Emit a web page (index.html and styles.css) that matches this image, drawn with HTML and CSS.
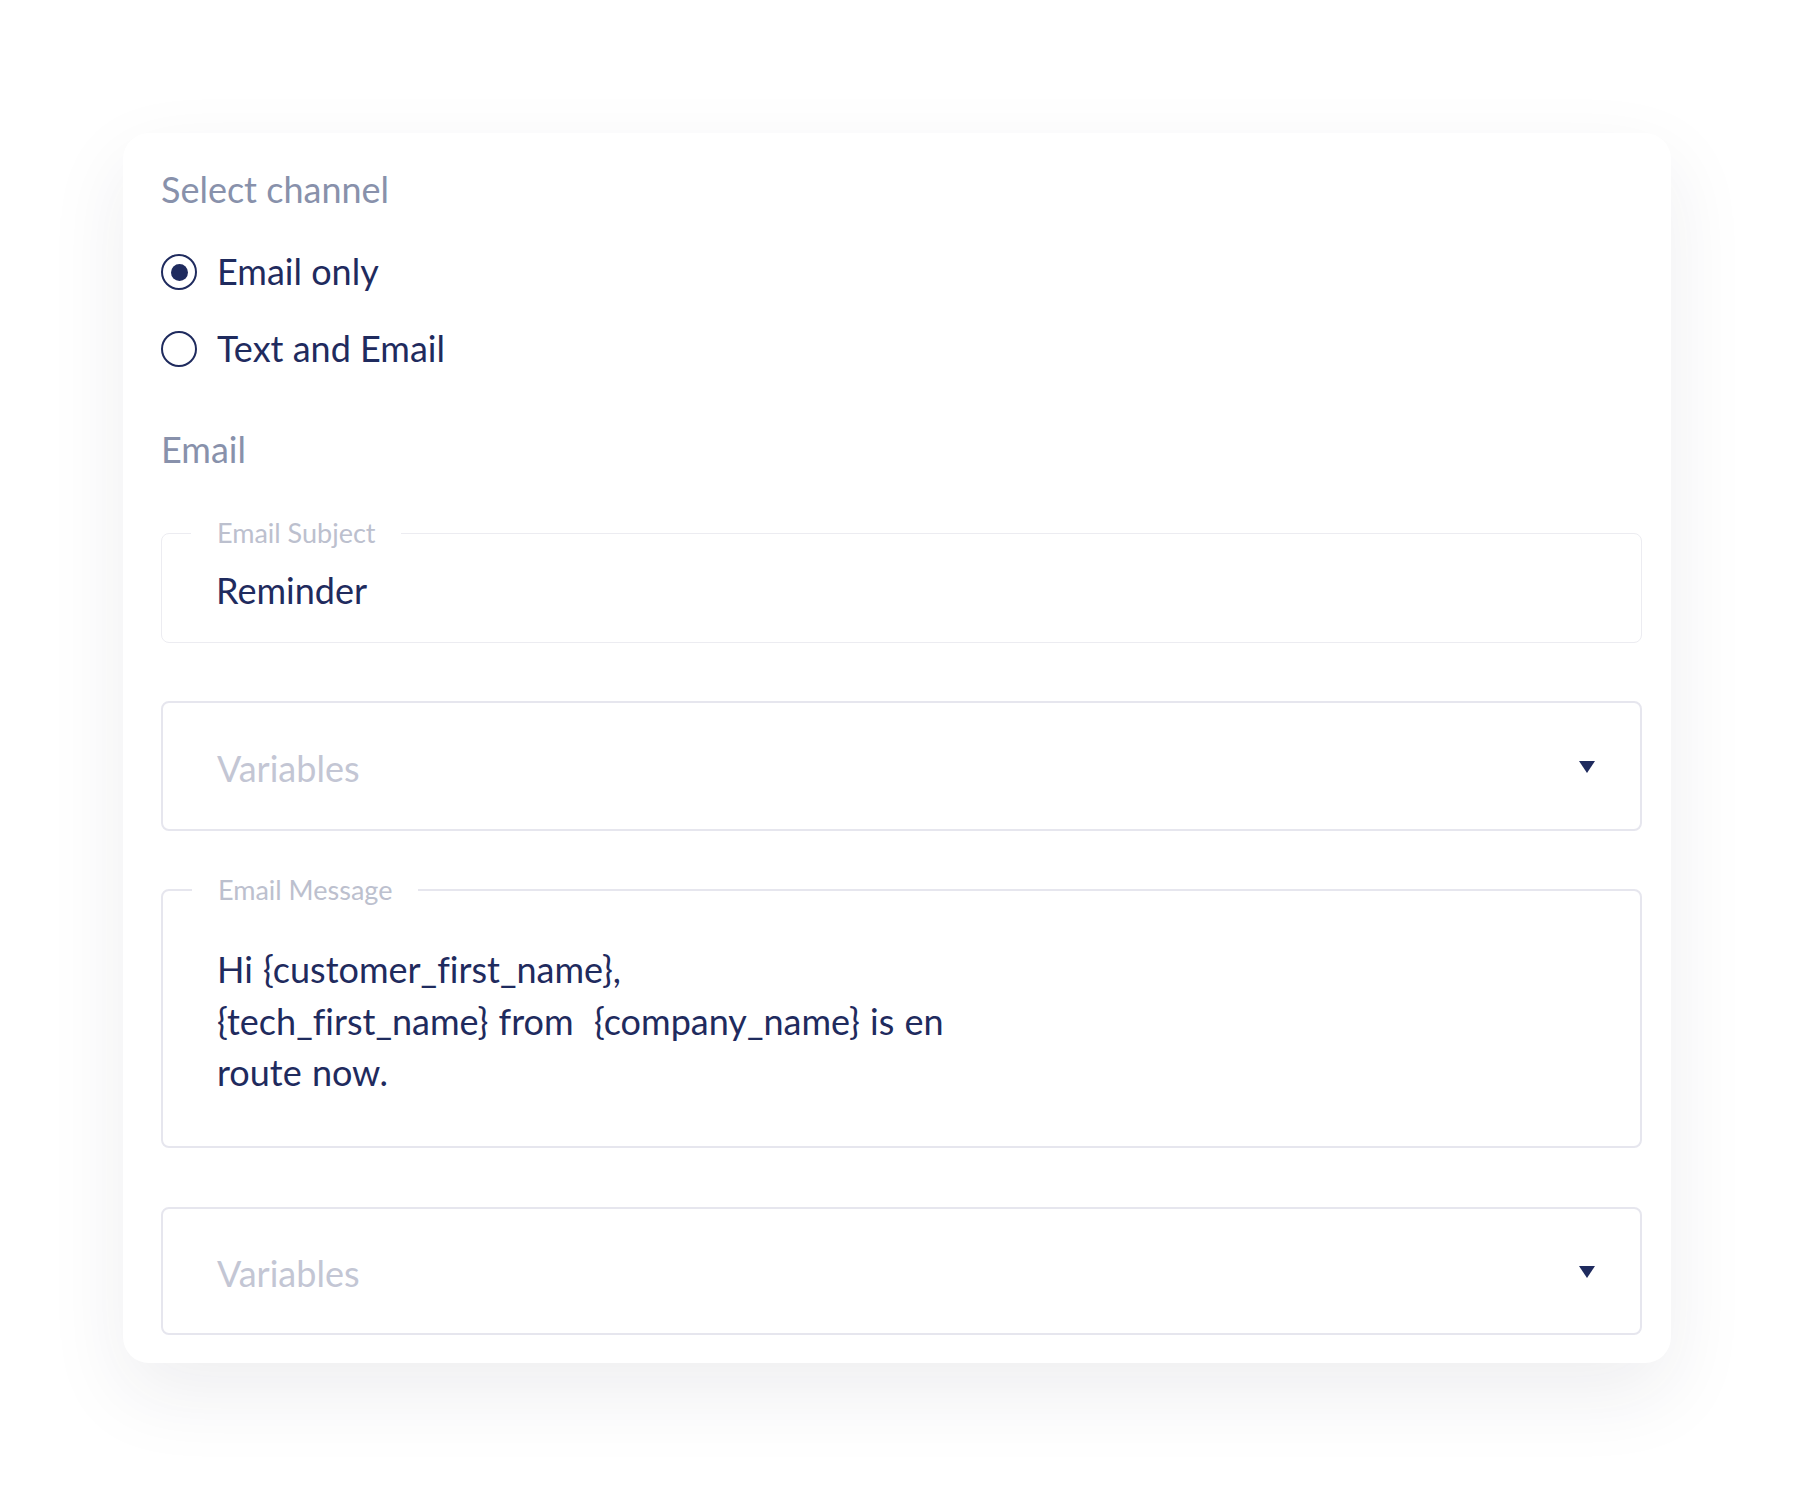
FILE: index.html
```html
<!DOCTYPE html>
<html lang="en">

<head>
    <meta charset="UTF-8">
    <meta name="viewport" content="width=device-width, initial-scale=1.0">
    <title>Reminder Settings</title>
    <link rel="stylesheet" href="styles.css">
</head>

<body>
    <div class="page">
        <div class="card">
            <p class="section-label">Select channel</p>

            <div class="radio-group">
                <label class="radio">
                    <span class="radio-dot checked"></span>
                    <span class="radio-text">Email only</span>
                </label>
                <label class="radio">
                    <span class="radio-dot"></span>
                    <span class="radio-text">Text and Email</span>
                </label>
            </div>

            <p class="section-label email-label">Email</p>

            <fieldset class="field subject">
                <legend>Email Subject</legend>
                <div class="field-value">Reminder</div>
            </fieldset>

            <div class="select">
                <span class="placeholder">Variables</span>
                <span class="caret"></span>
            </div>

            <fieldset class="field message">
                <legend>Email Message</legend>
                <div class="field-value">
                    Hi {customer_first_name},<br>
                    {tech_first_name} from &nbsp;{company_name} is en<br>
                    route now.
                </div>
            </fieldset>

            <div class="select">
                <span class="placeholder">Variables</span>
                <span class="caret"></span>
            </div>
        </div>
    </div>
</body>

</html>
```

FILE: styles.css
```css
body {
    margin: 0;
    background-color: #ffffff;
    font-family: Lato, "Open Sans", sans-serif;
    font-variant-ligatures: none;
    color: #1f2b5e;
}

.page {
    padding: 133px 0 134px 123px;
}

.card {
    width: 1548px;
    height: 1230px;
    box-sizing: border-box;
    padding: 34px 29px 29px 38px;
    background: #ffffff;
    border-radius: 26px;
    box-shadow: 0 30px 80px rgba(40, 40, 70, 0.08);
}

.section-label {
    margin: 0;
    font-size: 36px;
    line-height: 44px;
    color: #8891ab;
}

.radio-group {
    display: flex;
    flex-direction: column;
    gap: 33px;
    margin: 38px 0 57px;
}

.radio {
    display: flex;
    align-items: center;
    height: 44px;
    font-size: 36px;
    line-height: 44px;
}

.radio-dot {
    width: 36px;
    height: 36px;
    box-sizing: border-box;
    border: 2.5px solid #1f2b5e;
    border-radius: 50%;
    margin: 2px 20px 0 0;
    display: flex;
    align-items: center;
    justify-content: center;
}

.radio-dot.checked::after {
    content: "";
    width: 17px;
    height: 17px;
    border-radius: 50%;
    background: #1f2b5e;
}

.email-label {
    margin-bottom: 46px;
}

.field {
    margin: 0;
    min-width: 0;
    padding: 0 40px 0 29px;
    border: 2px solid #e6e6ee;
    border-radius: 8px;
}

.field.subject {
    border-color: #ececf1;
    border-width: 1.5px;
    padding-top: 19px;
    padding-bottom: 30px;
}

.field legend {
    padding: 0 26px;
    font-size: 27px;
    line-height: 32px;
    color: #bcc0ce;
}

.field-value {
    padding-left: 25px;
    font-size: 36px;
    line-height: 44px;
}

.field.message {
    margin-top: 43px;
    padding-top: 38px;
    padding-bottom: 47px;
}

.field.message .field-value {
    line-height: 51.5px;
    word-spacing: 1px;
}

.select {
    margin-top: 58px;
    height: 130px;
    box-sizing: border-box;
    border: 2px solid #e6e6ee;
    border-radius: 8px;
    display: flex;
    align-items: center;
    justify-content: space-between;
    padding: 0 45px 0 54px;
}

.message + .select {
    margin-top: 59px;
    height: 128px;
}

.placeholder {
    font-size: 36px;
    line-height: 44px;
    color: #c3c6d4;
    margin-top: 4px;
}

.caret {
    width: 0;
    height: 0;
    border-left: 8.5px solid transparent;
    border-right: 8.5px solid transparent;
    border-top: 12px solid #1f2b5e;
    margin-top: 2px;
}
```
